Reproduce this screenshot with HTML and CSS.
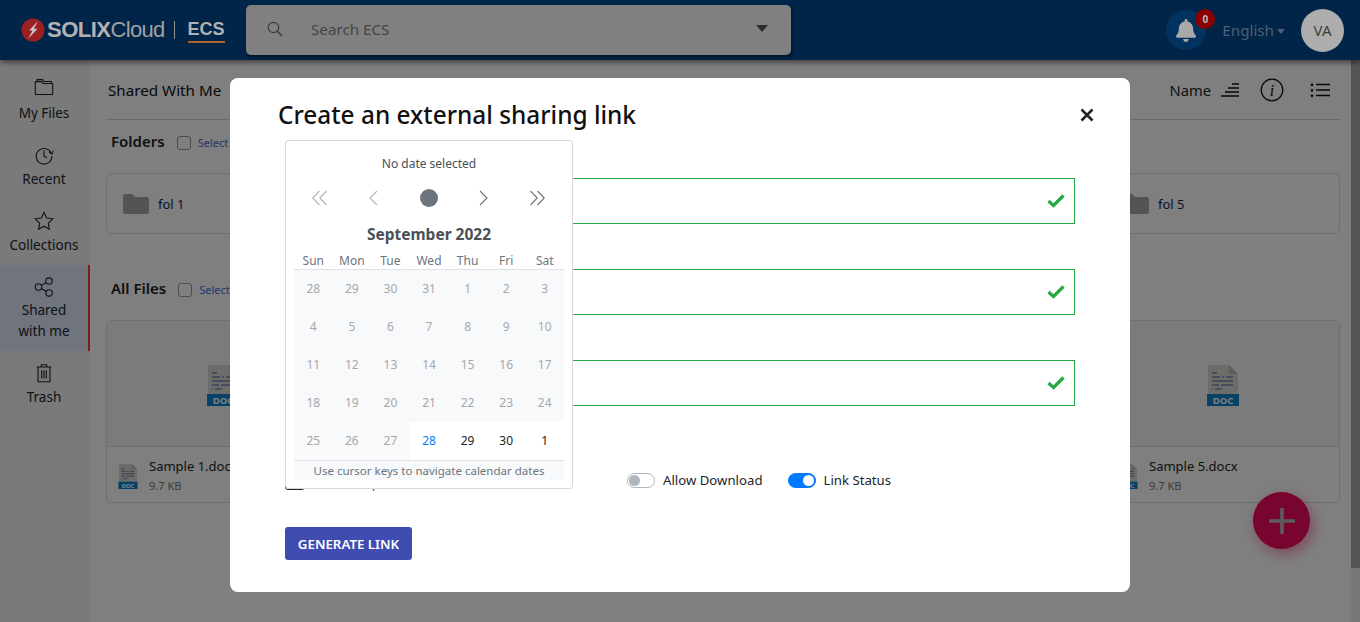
FILE: index.html
```html
<!DOCTYPE html>
<html lang="en">
<head>
<meta charset="utf-8">
<title>Create an external sharing link</title>
<link rel="stylesheet" href="styles.css">
</head>
<body>
<svg class="defs" width="0" height="0">
  <symbol id="doc" viewBox="0 0 32 41">
    <path d="M1 0h21l9 9v23H1z" fill="#d9d9d0"/>
    <path d="M22 0l9 9h-9z" fill="#bdbdb2"/>
    <path d="M5 8h5M5 12h8M15 12h2M19 12h7M5 16h21M5 20h7M14 20h12M5 24h1M8 24h7" stroke="#3f5fa8" stroke-width="1.200"/>
    <rect x="0" y="29" width="32" height="12" fill="#0a84cc"/>
    <text x="16" y="39" text-anchor="middle" class="doc-label">DOC</text>
  </symbol>
</svg>
<header class="topbar">
  <div class="logo">
    <svg class="logo-mark" viewBox="0 0 24 24" width="24" height="24"><circle cx="12" cy="12" r="11.5" fill="#9c1f22"/><path d="M17 3 8 12.500h3.600L7 21l9.500-10.200h-3.700z" fill="#c9c9c9"/></svg>
    <span class="logo-solix">SOLIX</span><span class="logo-cloud">Cloud</span>
    <span class="logo-sep"></span>
    <span class="logo-ecs">ECS</span>
  </div>
  <div class="search">
    <svg class="search-icon" viewBox="0 0 16 16" width="16" height="16"><circle cx="6.500" cy="6.500" r="5.200" fill="none" stroke="#3c3c3c" stroke-width="1.200"/><path d="m10.500 10.500 4.500 4.500" stroke="#3c3c3c" stroke-width="1.600"/></svg>
    <span class="search-text">Search ECS</span>
    <span class="search-caret"></span>
  </div>
  <div class="top-right">
    <div class="bell">
      <svg viewBox="0 0 448 512" width="20" height="23"><path fill="#a9a9a9" d="M224 512c35 0 64-29 64-64H160c0 35 29 64 64 64zm215-150c-19-21-55-52-55-154 0-78-54-140-128-155V32a32 32 0 0 0-64 0v21C118 68 64 130 64 208c0 102-36 133-55 154-6 6-9 14-9 22 0 16 13 32 32 32h384c19 0 32-16 32-32 0-8-3-16-9-22z"/></svg>
      <span class="badge">0</span>
    </div>
    <span class="lang">English</span><span class="lang-caret"></span>
    <span class="avatar">VA</span>
  </div>
</header>

<div class="page">
  <nav class="sidebar">
    <a class="nav-item">
      <svg viewBox="0 2 24 24" width="22" height="22" fill="none" stroke="#222" stroke-width="1.200"><path d="M2.500 20V6h7l1.500 2h10.500v12z"/><path d="M4.500 6V3.800h6l1.500 2h8v2"/></svg>
      <span>My Files</span>
    </a>
    <a class="nav-item">
      <svg viewBox="0 0 24 24" width="22" height="22" fill="none" stroke="#222" stroke-width="1.200"><path d="M20 10.500A8.500 8.500 0 1 0 20.500 13"/><path d="M17.500 8.500 20.500 11l1.500-3.500"/><path d="M12 7v6l3 2"/></svg>
      <span>Recent</span>
    </a>
    <a class="nav-item">
      <svg viewBox="0 0 24 24" width="22" height="22" fill="none" stroke="#222" stroke-width="1.200"><path d="m12 2.500 2.900 6.200 6.700.9-4.900 4.700 1.200 6.700-5.900-3.300L6.100 21l1.200-6.700-4.900-4.700 6.700-.9z"/></svg>
      <span>Collections</span>
    </a>
    <a class="nav-item is-active">
      <svg viewBox="0 0 24 24" width="22" height="22" fill="none" stroke="#222" stroke-width="1.200"><circle cx="6" cy="12" r="3.500"/><circle cx="17.500" cy="5.500" r="3.500"/><circle cx="17.500" cy="18.500" r="3.500"/><path d="m9 10.300 5.500-3.100M9 13.700l5.500 3.100"/></svg>
      <span>Shared<br>with me</span>
    </a>
    <a class="nav-item">
      <svg viewBox="0 0 24 24" width="22" height="22" fill="none" stroke="#222" stroke-width="1.200"><path d="M4 5.500h16M9 5.500V3h6v2.500M5.500 5.500v16h13v-16M9.500 9v9M12 9v9M14.500 9v9"/></svg>
      <span>Trash</span>
    </a>
  </nav>

  <main class="content">
    <div class="toolbar">
      <span class="crumb">Shared With Me</span>
      <div class="tools">
        <span class="sort-label">Name</span>
        <svg viewBox="0 0 18 14" width="18" height="14"><path d="M11 1h7M7 5h11M4 9h14M0 13h18" stroke="#111" stroke-width="1.600"/></svg>
        <svg class="info" viewBox="0 0 24 24" width="24" height="24"><circle cx="12" cy="12" r="10.800" fill="none" stroke="#111" stroke-width="1.300"/><text x="12" y="18" text-anchor="middle" class="info-i">i</text></svg>
        <svg class="list" viewBox="0 0 20 16" width="20" height="16"><path d="M6 2.500h14M6 8h14M6 13.500h14" stroke="#111" stroke-width="1.300"/><path d="m2 .800.600 1.200 1.300.2-1 .9.300 1.300L2 3.800l-1.200.6.300-1.300-1-.9 1.300-.2zM2 6.300l.600 1.200 1.300.2-1 .9.300 1.300L2 9.300l-1.200.6.300-1.300-1-.9 1.300-.2zM2 11.800l.600 1.200 1.300.2-1 .9.300 1.300L2 14.800l-1.200.6.300-1.300-1-.9 1.300-.2z" fill="#111"/></svg>
      </div>
    </div>

    <section class="group">
      <div class="group-head">
        <h2>Folders</h2><span class="check"></span><span class="select">Select All</span>
      </div>
      <div class="grid">
        <div class="folder"><svg viewBox="0 0 26 20" width="26" height="20"><path d="M0 2a2 2 0 0 1 2-2h7l3 3h12a2 2 0 0 1 2 2v13a2 2 0 0 1-2 2H2a2 2 0 0 1-2-2z" fill="#a9a9a9"/></svg><span>fol 1</span></div>
        <div class="folder"><svg viewBox="0 0 26 20" width="26" height="20"><path d="M0 2a2 2 0 0 1 2-2h7l3 3h12a2 2 0 0 1 2 2v13a2 2 0 0 1-2 2H2a2 2 0 0 1-2-2z" fill="#a9a9a9"/></svg><span>fol 2</span></div>
        <div class="folder"><svg viewBox="0 0 26 20" width="26" height="20"><path d="M0 2a2 2 0 0 1 2-2h7l3 3h12a2 2 0 0 1 2 2v13a2 2 0 0 1-2 2H2a2 2 0 0 1-2-2z" fill="#a9a9a9"/></svg><span>fol 3</span></div>
        <div class="folder"><svg viewBox="0 0 26 20" width="26" height="20"><path d="M0 2a2 2 0 0 1 2-2h7l3 3h12a2 2 0 0 1 2 2v13a2 2 0 0 1-2 2H2a2 2 0 0 1-2-2z" fill="#a9a9a9"/></svg><span>fol 4</span></div>
        <div class="folder"><svg viewBox="0 0 26 20" width="26" height="20"><path d="M0 2a2 2 0 0 1 2-2h7l3 3h12a2 2 0 0 1 2 2v13a2 2 0 0 1-2 2H2a2 2 0 0 1-2-2z" fill="#a9a9a9"/></svg><span>fol 5</span></div>
      </div>
    </section>

    <section class="group group-files">
      <div class="group-head">
        <h2>All Files</h2><span class="check"></span><span class="select">Select All</span>
      </div>
      <div class="grid">
        <div class="file">
          <div class="thumb"><svg class="doc" viewBox="0 0 32 41" width="32" height="41"><use href="#doc"/></svg></div>
          <div class="meta"><svg class="doc-small" viewBox="0 0 32 41" width="20" height="25"><use href="#doc"/></svg><div><div class="name">Sample 1.docx</div><div class="size">9.7 KB</div></div></div>
        </div>
        <div class="file">
          <div class="thumb"><svg class="doc" viewBox="0 0 32 41" width="32" height="41"><use href="#doc"/></svg></div>
          <div class="meta"><svg class="doc-small" viewBox="0 0 32 41" width="20" height="25"><use href="#doc"/></svg><div><div class="name">Sample 2.docx</div><div class="size">9.7 KB</div></div></div>
        </div>
        <div class="file">
          <div class="thumb"><svg class="doc" viewBox="0 0 32 41" width="32" height="41"><use href="#doc"/></svg></div>
          <div class="meta"><svg class="doc-small" viewBox="0 0 32 41" width="20" height="25"><use href="#doc"/></svg><div><div class="name">Sample 3.docx</div><div class="size">9.7 KB</div></div></div>
        </div>
        <div class="file">
          <div class="thumb"><svg class="doc" viewBox="0 0 32 41" width="32" height="41"><use href="#doc"/></svg></div>
          <div class="meta"><svg class="doc-small" viewBox="0 0 32 41" width="20" height="25"><use href="#doc"/></svg><div><div class="name">Sample 4.docx</div><div class="size">9.7 KB</div></div></div>
        </div>
        <div class="file">
          <div class="thumb"><svg class="doc" viewBox="0 0 32 41" width="32" height="41"><use href="#doc"/></svg></div>
          <div class="meta"><svg class="doc-small" viewBox="0 0 32 41" width="20" height="25"><use href="#doc"/></svg><div><div class="name">Sample 5.docx</div><div class="size">9.7 KB</div></div></div>
        </div>
      </div>
    </section>
  </main>

  <div class="scrollbar"><div class="scroll-thumb"></div></div>
</div>

<button class="fab"><svg viewBox="0 0 26 26" width="26" height="26"><path d="M13 0v26M0 13h26" stroke="#b8b8b8" stroke-width="3.600"/></svg></button>

<div class="backdrop"></div>

<div class="modal">
  <div class="modal-head">
    <h1>Create an external sharing link</h1>
    <svg class="close" viewBox="0 0 14 14" width="14" height="14"><path d="m1.500 1.500 11 11m0-11-11 11" stroke="#222" stroke-width="2.600"/></svg>
  </div>
  <div class="form">
    <div class="field"><svg viewBox="0 0 18 14" width="18" height="15"><path d="m1.500 7.500 5 4.500 10-10" fill="none" stroke="#28a745" stroke-width="3.200"/></svg></div>
    <div class="field"><svg viewBox="0 0 18 14" width="18" height="15"><path d="m1.500 7.500 5 4.500 10-10" fill="none" stroke="#28a745" stroke-width="3.200"/></svg></div>
    <div class="field"><svg viewBox="0 0 18 14" width="18" height="15"><path d="m1.500 7.500 5 4.500 10-10" fill="none" stroke="#28a745" stroke-width="3.200"/></svg></div>
    <div class="options">
      <label class="expiry"><span class="box"></span><span class="expiry-text">Enable Expire</span></label>
      <div class="switch-row">
        <span class="switch"></span><span class="switch-label">Allow Download</span>
      </div>
      <div class="switch-row">
        <span class="switch is-on"></span><span class="switch-label">Link Status</span>
      </div>
    </div>
    <button class="generate">GENERATE LINK</button>
  </div>

  <div class="calendar">
    <div class="cal-value">No date selected</div>
    <div class="cal-nav">
      <svg viewBox="0 0 16 16" width="16" height="16" class="muted"><path d="M7.500 1 .8 8l6.700 7M14.500 1 7.800 8l6.700 7" fill="none" stroke="#adb5bd" stroke-width="1.100"/></svg>
      <svg viewBox="0 0 16 16" width="16" height="16" class="muted"><path d="M11 1 4 8l7 7" fill="none" stroke="#adb5bd" stroke-width="1.100"/></svg>
      <span class="cal-dot"></span>
      <svg viewBox="0 0 16 16" width="16" height="16"><path d="m5 1 7 7-7 7" fill="none" stroke="#6c757d" stroke-width="1.100"/></svg>
      <svg viewBox="0 0 16 16" width="16" height="16"><path d="M1.500 1 8.200 8l-6.700 7M8.500 1l6.700 7-6.700 7" fill="none" stroke="#6c757d" stroke-width="1.100"/></svg>
    </div>
    <div class="cal-month">September 2022</div>
    <div class="cal-week"><span>Sun</span><span>Mon</span><span>Tue</span><span>Wed</span><span>Thu</span><span>Fri</span><span>Sat</span></div>
    <div class="cal-grid">
      <span class="off">28</span><span class="off">29</span><span class="off">30</span><span class="off">31</span><span class="off">1</span><span class="off">2</span><span class="off">3</span>
      <span class="off">4</span><span class="off">5</span><span class="off">6</span><span class="off">7</span><span class="off">8</span><span class="off">9</span><span class="off">10</span>
      <span class="off">11</span><span class="off">12</span><span class="off">13</span><span class="off">14</span><span class="off">15</span><span class="off">16</span><span class="off">17</span>
      <span class="off">18</span><span class="off">19</span><span class="off">20</span><span class="off">21</span><span class="off">22</span><span class="off">23</span><span class="off">24</span>
      <span class="off">25</span><span class="off">26</span><span class="off">27</span><span class="today">28</span><span>29</span><span>30</span><span>1</span>
    </div>
    <div class="cal-foot">Use cursor keys to navigate calendar dates</div>
  </div>
</div>
</body>
</html>
```
FILE: styles.css
```css
* { box-sizing: border-box; }
html, body { margin: 0; height: 622px; overflow: hidden; }
body { font-family: "Noto Sans", "Open Sans", sans-serif; font-size: 14px; color: #212529; background: #fff; position: relative; }

.defs { position: absolute; top: 100px; left: 100px; }
.doc-label { font: 700 9.500px "Noto Sans", sans-serif; fill: #fff; }

/* Top bar sits over the backdrop, with its colours as shown */
.topbar { position: relative; z-index: 3; height: 60px; background: #002548; display: flex; align-items: center; padding-left: 21px; box-shadow: 0 2px 6px rgba(0,0,0,.55); }
.logo { display: flex; align-items: center; width: 225px; color: #b2b2b2; flex: none; }
.logo-mark { flex: none; margin-right: 2px; }
.logo-solix { font: 700 22px "Liberation Sans", sans-serif; letter-spacing: -.5px; }
.logo-cloud { font: 400 22px "Liberation Sans", sans-serif; letter-spacing: -.7px; color: #a0a0a0; }
.logo-sep { width: 1px; height: 18px; background: #8f8f8f; margin: 0 13px 0 9px; }
.logo-ecs { font: 700 18px "Liberation Sans", sans-serif; padding-bottom: 3px; border-bottom: 2px solid #b0632a; line-height: 17px; margin-top: 3px; }
.search { width: 545px; height: 50px; background: #808080; border-radius: 5px; display: flex; align-items: center; padding: 0 22px 3px 21px; box-shadow: 1px 2px 3px rgba(0,0,0,.5); flex: none; }
.search-icon { flex: none; }
.search-text { margin-left: 28px; font-size: 15.200px; color: #454545; flex: 1; }
.search-caret { border: 6px solid transparent; border-top: 7px solid #2c2c2c; border-bottom: 0; margin-right: 1px; }
.top-right { margin-left: auto; display: flex; align-items: center; padding-right: 16px; }
.bell { width: 40px; height: 40px; border-radius: 50%; background: #02325f; display: flex; align-items: center; justify-content: center; position: relative; margin-right: 16px; }
.badge { position: absolute; top: -1px; right: -9px; width: 20px; height: 20px; border-radius: 50%; background: #8a0000; color: #bbb; font-size: 10px; font-weight: 700; display: flex; align-items: center; justify-content: center; }
.lang { font-size: 15.200px; color: #4d6077; }
.lang-caret { border: 4.500px solid transparent; border-top: 5px solid #4d6077; border-bottom: 0; margin: 2px 16px 0 3px; }
.avatar { width: 43px; height: 43px; border-radius: 50%; background: #adadad; color: #3c3c3c; font-size: 15px; display: flex; align-items: center; justify-content: center; }

/* Page under the backdrop */
.page { display: flex; height: 562px; }
.sidebar { width: 90px; flex: none; background: #f5f5f5; padding-top: 7px; }
.nav-item { display: flex; flex-direction: column; align-items: center; text-align: center; font-size: 13.500px; line-height: 21px; color: #212529; height: 66px; padding-top: 11px; border-right: 2px solid transparent; }
.nav-item svg { margin-bottom: 3px; flex: none; }
.nav-item.is-active { height: 86px; background: #dfe9fb; border-right-color: #ff3040; }
.nav-item.is-active svg { margin-bottom: 2px; }
.content { flex: 1; padding: 0 11px 0 16px; min-width: 0; }
.toolbar { height: 60px; border-bottom: 1px solid #d4d4d4; display: flex; align-items: center; justify-content: space-between; padding: 0 10px 0 2px; }
.crumb { font-size: 15.200px; color: #111; }
.tools { display: flex; align-items: center; }
.sort-label { font-size: 14.700px; margin-right: 10px; }
.info { margin: 0 26px 0 21px; }
.info-i { font: italic 16px "Liberation Serif", serif; fill: #111; }
.group-head { display: flex; align-items: center; height: 43px; padding: 0 0 2px 5px; }
.group-head h2 { margin: 0; font-size: 15px; font-weight: 600; color: #222; }
.check { width: 14px; height: 14px; border: 1px solid #999; border-radius: 3px; background: #fff; margin: 4px 7px 0 12px; }
.select { font-size: 11px; color: #3f6cd8; margin-top: 4px; white-space: nowrap; }
.group-files { margin-top: 33px; }
.grid { display: grid; grid-template-columns: repeat(5, 1fr); gap: 16px; margin-top: 10px; }
.folder { height: 61px; border: 1px solid #dcdcdc; border-radius: 6px; display: flex; align-items: center; padding-left: 16px; font-size: 13px; color: #0f2a52; }
.folder span { margin-left: 9px; }
.file { height: 183px; border: 1px solid #dcdcdc; border-radius: 6px; display: flex; flex-direction: column; }
.thumb { height: 126px; border-bottom: 1px solid #dcdcdc; background: #f6f6f6; display: flex; align-items: center; justify-content: center; padding-top: 4px; }
.meta { flex: 1; display: flex; align-items: center; padding: 3px 0 0 11px; }
.doc-small { margin-right: 11px; flex: none; }
.name { font-size: 13px; color: #222; line-height: 19px; }
.size { font-size: 11px; color: #777; line-height: 19px; }
.scrollbar { width: 9px; flex: none; background: #f1f1f1; }
.scroll-thumb { height: 508px; background: #aaa; }

.fab { position: absolute; left: 1253px; top: 492px; width: 57px; height: 57px; border-radius: 50%; border: 0; padding: 0; background: #f00a5f; box-shadow: 3px 5px 14px rgba(240,10,95,.45); display: flex; align-items: center; justify-content: center; }

.backdrop { position: absolute; inset: 0; background: rgba(0,0,0,.5); z-index: 2; }

/* Modal */
.modal { position: absolute; z-index: 4; left: 230px; top: 78px; width: 900px; height: 514px; background: #fff; border-radius: 8px; }
.modal-head { display: flex; align-items: center; justify-content: space-between; height: 73px; padding: 0 36px 0 48px; }
.modal-head h1 { margin: 0; font-size: 24.400px; font-weight: 500; color: #111; }
.form { padding: 27px 55px 0; }
.field { height: 46px; border: 1px solid #28a745; margin-bottom: 45px; display: flex; align-items: center; justify-content: flex-end; padding: 0 9px 2px 0; }
.options { display: flex; align-items: center; height: 22px; margin-top: 63px; }
.expiry { display: flex; align-items: center; width: 342px; color: #0b5ed7; font-size: 13px; }
.expiry-text { margin-top: 5px; }
.box { width: 20px; height: 20px; border: 1.500px solid #222; border-radius: 3px; margin-right: 8px; }
.switch-row { display: flex; align-items: center; margin-right: 25px; }
.switch { width: 28px; height: 15px; border: 1px solid #adb5bd; border-radius: 8px; position: relative; margin-right: 8px; }
.switch::after { content: ""; position: absolute; left: 1px; top: 1px; width: 11px; height: 11px; border-radius: 50%; background: #adb5bd; }
.switch.is-on { background: #007bff; border-color: #007bff; }
.switch.is-on::after { left: 14px; background: #fff; }
.switch-label { font-size: 13.200px; color: #212529; }
.generate { display: block; margin-top: 36px; width: 127px; height: 33px; background: #3f4db0; color: #fff; border: 0; border-radius: 3px; font: 600 13.300px "Noto Sans", sans-serif; padding: 0; }

/* Calendar popup */
.calendar { position: absolute; left: 55px; top: 62px; width: 288px; height: 349px; background: #fff; border: 1px solid rgba(0,0,0,.15); border-radius: 4px; padding: 14px 8px 8px; }
.cal-value { text-align: center; font-size: 12px; line-height: 18px; color: #495057; }
.cal-nav { display: grid; grid-template-columns: repeat(5, 54.300px); justify-items: center; align-items: center; margin: 9px 0 1px -1px; height: 32px; }
.cal-dot { width: 18px; height: 18px; border-radius: 50%; background: #6c757d; }
.cal-month { text-align: center; font-size: 15.500px; font-weight: 700; color: #495057; line-height: 20px; margin-top: 10px; }
.cal-week { display: grid; grid-template-columns: repeat(7, 1fr); text-align: center; font-size: 12px; line-height: 18px; color: #6c757d; margin-top: 8px; border-bottom: 1px solid #dee2e6; height: 18px; }
.cal-grid { display: grid; grid-template-columns: repeat(7, 1fr); grid-auto-rows: 38px; text-align: center; font-size: 12px; color: #212529; }
.cal-grid span { display: flex; align-items: center; justify-content: center; padding-bottom: 1px; }
.cal-grid .off { background: #f8f9fa; color: #a4a8ac; }
.cal-grid .today { color: #007bff; }
.cal-foot { background: #f8f9fa; border-top: 1px solid #dee2e6; border-radius: 0 0 4px 4px; text-align: center; font-size: 11.500px; line-height: 19px; color: #6c757d; }
```
